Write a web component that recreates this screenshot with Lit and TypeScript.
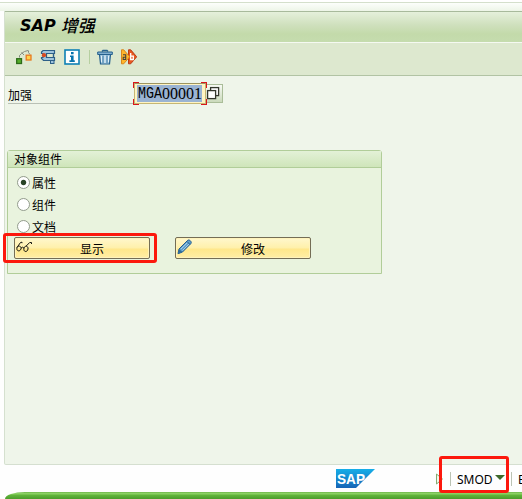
import { LitElement, html, css, svg } from "lit";
import { customElement, state } from "lit/decorators.js";

const icons = {
  other: svg`<path d="M3.500 8.500V6.500L5.500 4.500L8.500 2.500L12 1.500M12.500 1.500v2l1.500 2M5.500 3.500l2.500 2.500" fill="none" stroke="#858b80"/>
    <rect x=".7" y="9.7" width="4.800" height="4.800" fill="#55ad2b" stroke="#2c6b18" stroke-width="1.3"/>
    <rect x="10.200" y="6.200" width="4.800" height="4.800" fill="#ffd34a" stroke="#e87a20" stroke-width="1.3"/>`,
  clamp: svg`<path d="M3 1.500h11.500v3H6.500v4h8v3H3.500L1.500 9.500V8.500H3V4.500H1.500V3z" fill="#9fc4dd" stroke="#2d5f88" stroke-width="1.200"/>
    <path d="M13.500 4.500v4" stroke="#2d5f88" stroke-width="1.400"/>
    <rect x="10.500" y="11.500" width="3.500" height="3" fill="#9fc4dd" stroke="#2d5f88"/>
    <circle cx="4" cy="6.200" r="2.100" fill="#dc4a22"/>`,
  info: svg`<rect x="1" y="1" width="14" height="14" fill="#fff" stroke="#0e80b5" stroke-width="1.6"/>
    <path d="M7 3h2.6v2.3H7zM6 6.5h3.6v4.8h1.2v1.6H5.4v-1.6H7V8H6z" fill="#0874ae"/>`,
  trash: svg`<path d="M5 2.500l1-1h4l1 1" fill="none" stroke="#25608d" stroke-width="1.400"/>
    <path d="M2.500 5.500h11l-1 9.500h-9z" fill="#a7cbe1" stroke="#25608d" stroke-width="1.200"/>
    <path d="M.7 3h14.600v2.500H.7z" fill="#83b1d0" stroke="#25608d"/>
    <path d="M6 6.500v7.500M10 6.500v7.500" stroke="#3f7ba6"/><path d="M8 6.500v7.500M4.500 7v6M11.500 7v6" stroke="#e3f0f7"/>`,
  rename: svg`<path d="M7.500 .8h2.200l6 7-6 7H7.500z" fill="#e9571f" stroke="#b83a16"/>
    <path d="M.5 .8h2.200l6 7-6 7H.5z" fill="#ffb52b" stroke="#d8851c"/>
    <path d="M2 5.800h2.700v4.700H2.200v-2.300h2.500" fill="none" stroke="#45423b" stroke-width="1.100"/>
    <path d="M9.700 4v6.500h2.600V7.200H9.700" fill="none" stroke="#fff" stroke-width="1.300"/>`,
  glasses: svg`<path d="M1 8.500L4.500 3.500 6 3.200M6 3.200v1M1 8.500c-1 4 3.200 4.500 4 1.300C5.600 6.500 1.600 6.500 1 8.500M5 9.200q1.500-2 3 0M8 9c-1 4.500 3.500 4.500 4 1C12.500 6.500 8.500 6.500 8 9M10.200 7l3.500-3.500H15.500V5" fill="none" stroke="#15150f"/>`,
  pencil: svg`<path d="M1 14.700l1-4.700L10.800 1.200c1.500-1 4.300 1.500 3.200 3.200L5.500 13z" fill="#5fa0cd" stroke="#245d8d"/>
    <path d="M4 10l6.500-6.500M5.500 11.500L12 5" stroke="#a4cce5"/><path d="M1 14.700l1-4.700 3.500 3z" fill="#2e6c9c"/><path d="M10 2.500l3 3" stroke="#245d8d"/>`,
  copy: svg`<rect x="5.600" y="1.600" width="8" height="8" fill="#fff" stroke="#34372d" stroke-width="1.300"/>
    <rect x="2.600" y="4.600" width="8" height="8" fill="#fff" stroke="#34372d" stroke-width="1.300"/>`,
};

const icon = (name: keyof typeof icons) =>
  html`<svg class="icon" viewBox="0 0 16 16" width="16" height="16">${icons[name]}</svg>`;

@customElement("app-root")
export class AppRoot extends LitElement {
  @state() private selected = "属性";

  static styles = css`
    :host {
      display: flex; flex-direction: column; position: relative;
      width: 522px; height: 499px; overflow: hidden; box-sizing: border-box;
      background: #fefefe; color: #000;
      font: 12px/16px "Liberation Sans", "Noto Sans CJK SC", sans-serif;
    }
    * { box-sizing: border-box; }
    .icon { display: block; flex: none; }
    .top { height: 11px; flex: none; background: linear-gradient(#fff 2px, #d4dfcb 2px, #d4dfcb 3px, #fcfefb 3px, #edf5e7); }
    .window { margin-left: 4px; height: 454px; flex: none; border-left: 1px solid #d5e0cf; border-bottom: 1px solid #d5dfd0; background: #eff5ea; border-bottom-left-radius: 2px; }
    .title {
      height: 31px; display: flex; align-items: center; padding: 0 0 1px 15px;
      background: linear-gradient(#a8ba9c 1px, #e5f0db 1px, #cfe0bd 14px, #c3daaa 23px, #c5dcae);
      font: italic bold 16px/24px "DejaVu Sans", "Noto Sans CJK SC", sans-serif; gap: 5px;
    }
    .title .cjk { font-size: 17px; font-weight: 500; }
    .tools { height: 34px; border-top: 1px solid #f5f9f2; border-bottom: 1px solid #b1c3a4; background: #dde8cf; display: flex; align-items: center; padding: 0 0 4px 11px; gap: 8px; }
    .sep { width: 1px; height: 14px; background: #b6cfa0; margin: 0 -1px 0 1px; }
    .entry { display: flex; height: 26px; margin: 6px 0 0 3px; }
    .label { width: 125px; height: 22px; border-bottom: 1px solid #b9c0b5; padding-top: 6px; }
    .field { position: relative; width: 72px; height: 21px; margin-left: 1px; margin-top: 1px; padding: 1px 2px; background: #fff4c2; border: 1px solid #c5b674; border-top-color: #9d945f; }
    .value { display: flex; height: 17px; width: 65px; padding-left: 1px; background: #9ab3d2; white-space: pre; font: 16px/17px "Liberation Serif", serif; }
    .alpha { width: 24px; padding-top: 1px; font-family: "Liberation Mono", monospace; transform: scaleX(.833); transform-origin: left; }
    .corner { position: absolute; width: 6px; height: 6px; border: 0 solid #d9161b; }
    .tl { left: -2px; top: -2px; border-width: 1px 0 0 1px; }
    .tr { right: -2px; top: -2px; border-width: 1px 1px 0 0; }
    .bl { left: -2px; bottom: -2px; border-width: 0 0 1px 1px; }
    .br { right: -2px; bottom: -2px; border-width: 0 1px 1px 0; }
    .match { width: 17px; height: 19px; margin-top: 2px; padding-top: 1px; border: 1px solid #aabd99; border-left: 0; background: linear-gradient(#f7faf4, #cbdabc); }
    .match .icon { margin-left: -1px; }
    .group { width: 375px; height: 124px; margin: 42px 0 0 2px; border: 1px solid #b1cd99; border-radius: 3px 3px 0 0; background: #e9f3de; }
    .legend { height: 17px; line-height: 18px; padding-left: 6px; border-bottom: 1px solid #b1cd99; background: linear-gradient(#e3f1d7, #cfe5ba); }
    .radios { padding: 4px 0 0 9px; height: 69px; }
    .radio { display: flex; height: 22px; align-items: center; gap: 2px; }
    .dot { width: 13px; height: 13px; border-radius: 50%; border: 1px solid #939c8d; background: #fff; margin-top: -1px; }
    .dot.on { background: radial-gradient(circle, #284325 2.2px, #fff 3.2px); }
    .radio span { padding-top: 1px; }
    .buttons { display: flex; gap: 25px; padding-left: 6px; }
    .button {
      width: 136px; height: 22px; display: flex; align-items: center; padding: 2px 0 0 1px; border: 1px solid #746d55; border-radius: 2px;
      background: linear-gradient(#fff7cd, #fff0aa 50%, #ffe78b 55%, #ffeea6); box-shadow: inset 0 0 0 1px #fff3bb;
    }
    .button .icon { margin-top: -4px; }
    .button .text { flex: 1; text-align: center; padding: 2px 0 0 3px; }
    .status { height: 27px; flex: none; display: flex; align-items: center; padding-left: 336px; }
    .logo { display: block; flex: none; }
    .tri { margin-left: 60px; flex: none; }
    .divider { width: 1px; height: 14px; background: #bbc3b4; margin-left: 6px; flex: none; }
    .code { margin-left: 6px; font: 12px/16px "Noto Sans", sans-serif; width: 33px; flex: none; white-space: nowrap; padding-top: 2px; }
    .caret { border: 5px solid transparent; border-top-color: #3f692b; border-bottom: 0; margin: -3px 0 0 5px; flex: none; }
    .edge { flex: none; height: 7px; margin-left: 5px; border-top-left-radius: 20px 7px; background: linear-gradient(#64ad43, #8bd063 1px, #8bd063 2px, #62b63b 3px, #4b9b2c); }
    .mark { position: absolute; border: 3px solid #fc180d; border-radius: 3px; }
    .mark.show { left: 3px; top: 233px; width: 154px; height: 30px; }
    .mark.tcode { left: 439px; top: 456px; width: 70px; height: 37px; }
  `;

  render() {
    return html`
      <div class="top"></div>
      <main class="window">
        <header class="title"><span>SAP</span><span class="cjk">增强</span></header>
        <nav class="tools">
          ${icon("other")}${icon("clamp")}${icon("info")}<i class="sep"></i>${icon("trash")}${icon("rename")}
        </nav>
        <div class="entry">
          <div class="label">加强</div>
          <div class="field">
            <div class="value"><span class="alpha">MGA</span><span>00001</span></div>
            <i class="corner tl"></i><i class="corner tr"></i><i class="corner bl"></i><i class="corner br"></i>
          </div>
          <div class="match">${icon("copy")}</div>
        </div>
        <section class="group">
          <div class="legend">对象组件</div>
          <div class="radios">
            ${["属性", "组件", "文档"].map((name) => html`
              <div class="radio" @click=${() => (this.selected = name)}>
                <i class="dot ${this.selected === name ? "on" : ""}"></i><span>${name}</span>
              </div>`)}
          </div>
          <div class="buttons">
            <div class="button">${icon("glasses")}<span class="text">显示</span></div>
            <div class="button">${icon("pencil")}<span class="text">修改</span></div>
          </div>
        </section>
      </main>
      <footer class="status">
        <svg class="logo" width="39" height="19" viewBox="0 0 39 19">
          <defs><linearGradient id="blue" x2="0" y2="1"><stop stop-color="#16aee8"/><stop offset="1" stop-color="#1664b5"/></linearGradient></defs>
          <path d="M0 0h39L20 19H0z" fill="url(#blue)"/>
          <text x="1" y="14.500" textLength="28" lengthAdjust="spacingAndGlyphs" font-family="Liberation Sans" font-weight="bold" font-size="15" fill="#fff">SAP</text>
        </svg>
        <svg class="tri" width="9" height="12" viewBox="0 0 9 12"><path d="M1.500 1v10L7.500 6z" fill="#f2f8ed" stroke="#85aa70"/></svg>
        <i class="divider"></i>
        <span class="code">SMOD</span><i class="caret"></i>
        <i class="divider"></i><span class="code">E</span>
      </footer>
      <div class="edge"></div>
      <div class="mark show"></div>
      <div class="mark tcode"></div>
    `;
  }
}
